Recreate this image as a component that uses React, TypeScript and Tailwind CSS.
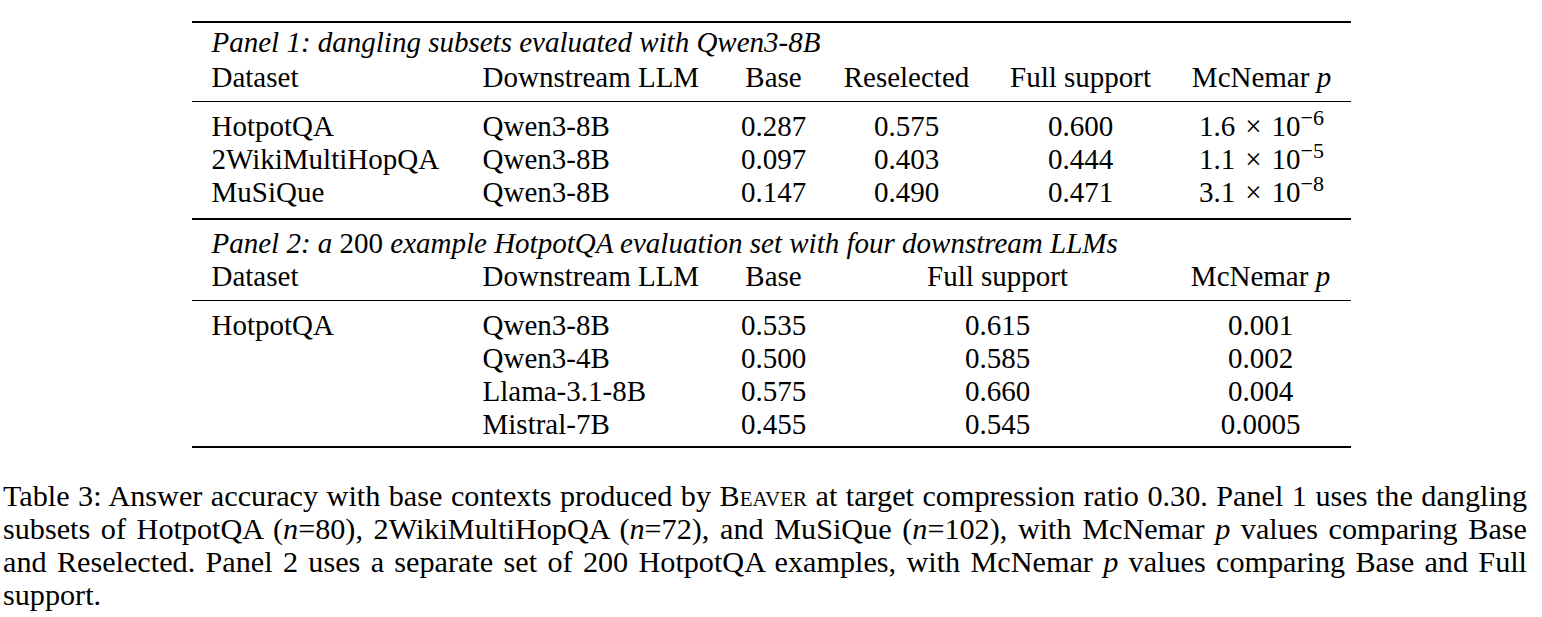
import React from 'react';

const p1Cols = 'grid grid-cols-[271px_260px_102px_164px_184px_178px]';
const p2Cols = 'grid grid-cols-[271px_260px_102px_346px_180px]';

type Row1 = { dataset: string; llm: string; base: string; resel: string; full: string; p: [string, string] };
type Row2 = { dataset: string; llm: string; base: string; full: string; p: string };

const panel1: Row1[] = [
  { dataset: 'HotpotQA', llm: 'Qwen3-8B', base: '0.287', resel: '0.575', full: '0.600', p: ['1.6', '6'] },
  { dataset: '2WikiMultiHopQA', llm: 'Qwen3-8B', base: '0.097', resel: '0.403', full: '0.444', p: ['1.1', '5'] },
  { dataset: 'MuSiQue', llm: 'Qwen3-8B', base: '0.147', resel: '0.490', full: '0.471', p: ['3.1', '8'] },
];

const panel2: Row2[] = [
  { dataset: 'HotpotQA', llm: 'Qwen3-8B', base: '0.535', full: '0.615', p: '0.001' },
  { dataset: '', llm: 'Qwen3-4B', base: '0.500', full: '0.585', p: '0.002' },
  { dataset: '', llm: 'Llama-3.1-8B', base: '0.575', full: '0.660', p: '0.004' },
  { dataset: '', llm: 'Mistral-7B', base: '0.455', full: '0.545', p: '0.0005' },
];

// 1.6 × 10^-6 style number
const Sci = ({ m, e }: { m: string; e: string }) => (
  <span>
    {m}
    <span className="mx-[10px]">×</span>
    10<sup className="text-[22px]">−{e}</sup>
  </span>
);

const Line = ({ children, last }: { children: React.ReactNode; last?: boolean }) => (
  <div className={last ? 'whitespace-nowrap text-left' : 'whitespace-nowrap text-justify [text-align-last:justify]'}>
    {children}
  </div>
);

const N = () => <i>n</i>;

export default function App() {
  return (
    <div className="font-[Liberation_Serif,Times_New_Roman,serif] text-[29px] leading-[33px] text-black bg-white w-[1542px] h-[617px] overflow-hidden pt-[21px]">
      <div className="mx-auto w-[1159px]">
        <div className="h-[2px] bg-black" />

        {/* panel 1 */}
        <div className="mt-[3px] h-[33px] pl-[20px] italic">Panel 1: dangling subsets evaluated with Qwen3-8B</div>
        <div className={`${p1Cols} mt-[2px] h-[33px]`}>
          <div className="pl-[20px]">Dataset</div>
          <div className="pl-[20px]">Downstream LLM</div>
          <div className="text-center">Base</div>
          <div className="text-center">Reselected</div>
          <div className="text-center">Full support</div>
          <div className="text-center">
            McNemar <i>p</i>
          </div>
        </div>
        <div className="mt-[7px] h-px bg-black" />
        <div className="mt-[8px]">
          {panel1.map((r) => (
            <div key={r.dataset} className={`${p1Cols} h-[33px]`}>
              <div className="pl-[20px]">{r.dataset}</div>
              <div className="pl-[20px]">{r.llm}</div>
              <div className="text-center">{r.base}</div>
              <div className="text-center">{r.resel}</div>
              <div className="text-center">{r.full}</div>
              <div className="text-center">
                <Sci m={r.p[0]} e={r.p[1]} />
              </div>
            </div>
          ))}
        </div>
        <div className="mt-[9px] h-[1.5px] bg-black" />

        {/* panel 2 */}
        <div className="mt-[7px] h-[33px] pl-[20px] italic">
          Panel 2: a <span className="not-italic">200</span> example HotpotQA evaluation set with four downstream LLMs
        </div>
        <div className={`${p2Cols} h-[33px]`}>
          <div className="pl-[20px]">Dataset</div>
          <div className="pl-[20px]">Downstream LLM</div>
          <div className="text-center">Base</div>
          <div className="text-center">Full support</div>
          <div className="text-center">
            McNemar <i>p</i>
          </div>
        </div>
        <div className="mt-[7px] h-px bg-black" />
        <div className="mt-[8px]">
          {panel2.map((r) => (
            <div key={r.llm} className={`${p2Cols} h-[33px]`}>
              <div className="pl-[20px]">{r.dataset}</div>
              <div className="pl-[20px]">{r.llm}</div>
              <div className="text-center">{r.base}</div>
              <div className="text-center">{r.full}</div>
              <div className="text-center">{r.p}</div>
            </div>
          ))}
        </div>
        <div className="mt-[5px] h-[2px] bg-black" />
      </div>

      {/* caption */}
      <div className="mt-[32px] pl-[3px] pr-[15px] text-[30.2px]">
        <Line>
          Table 3: Answer accuracy with base contexts produced by <span className="[font-variant:small-caps]">Beaver</span> at target compression ratio 0.30. Panel 1 uses the dangling
        </Line>
        <Line>
          subsets of HotpotQA (<N />=80), 2WikiMultiHopQA (<N />=72), and MuSiQue (<N />=102), with McNemar <i>p</i> values comparing Base
        </Line>
        <Line>
          and Reselected. Panel 2 uses a separate set of 200 HotpotQA examples, with McNemar <i>p</i> values comparing Base and Full
        </Line>
        <Line last>support.</Line>
      </div>
    </div>
  );
}
